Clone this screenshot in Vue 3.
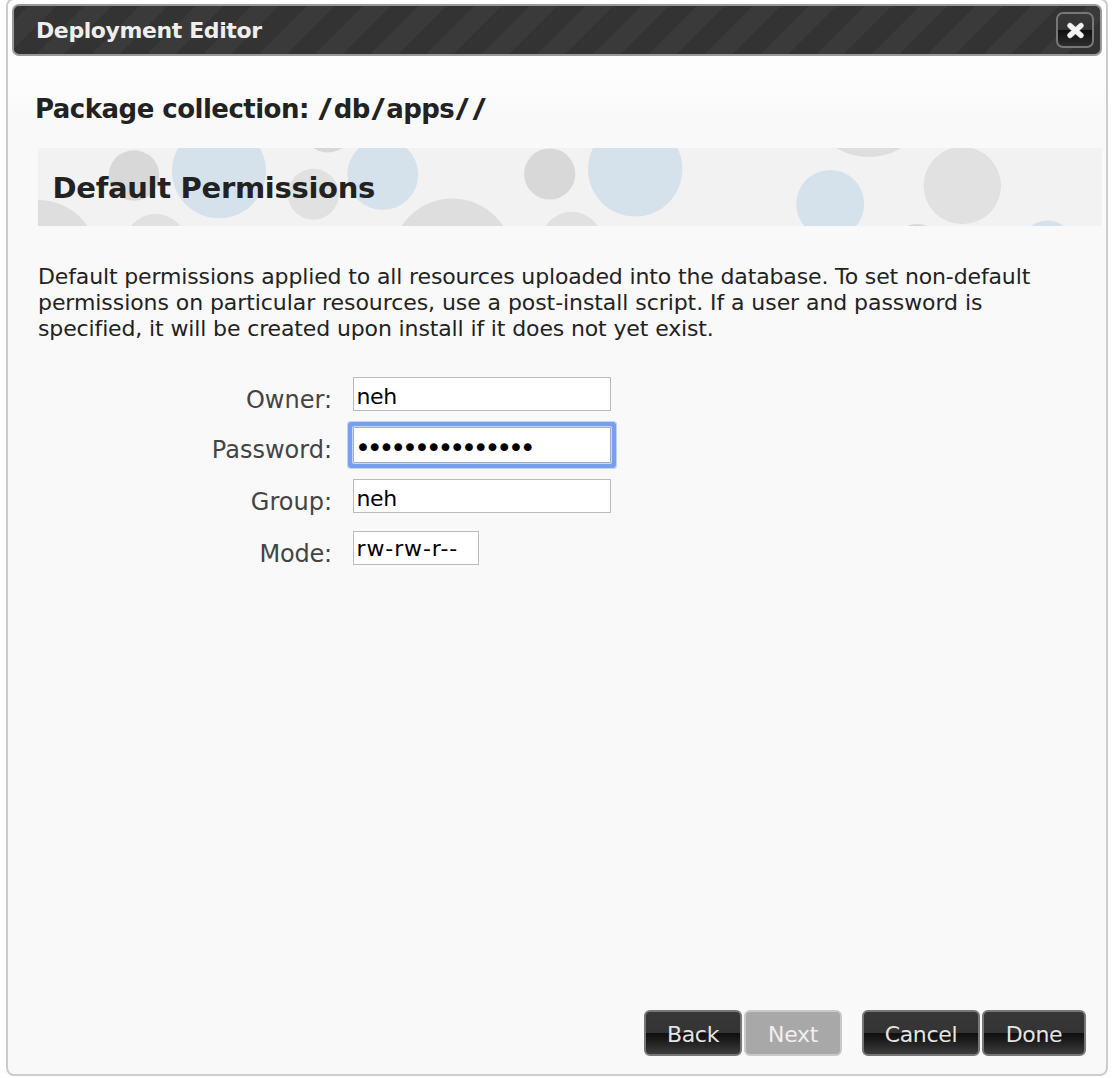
<script setup>
import { ref } from 'vue'

const fields = ref([
  { id: 'owner', label: 'Owner:', value: 'neh', type: 'text' },
  { id: 'password', label: 'Password:', value: 'secretpassword1', type: 'password' },
  { id: 'group', label: 'Group:', value: 'neh', type: 'text' },
  { id: 'mode', label: 'Mode:', value: 'rw-rw-r--', type: 'text' },
])

const circles = [
  [0, 112, 60, '#dedede'],
  [96, 27.5, 25.3, '#d8d8d8'],
  [117.7, 97, 31, '#e1e1e1'],
  [181, 23.3, 47, '#d5e2ec'],
  [289.7, -21.5, 26, '#d8d8d8'],
  [275.3, 46.3, 25.5, '#e1e1e1'],
  [344.8, 26.5, 35.5, '#d5e2ec'],
  [414.3, 111.6, 61, '#dedede'],
  [511.7, 26, 25.6, '#d8d8d8'],
  [533.7, 94.8, 31, '#e1e1e1'],
  [597.2, 21.3, 47.2, '#d5e2ec'],
  [830.7, -54, 63, '#dedede'],
  [792.2, 55.9, 34, '#d5e2ec'],
  [924.3, 37.6, 38.7, '#e1e1e1'],
  [879, 102, 26, '#d8d8d8'],
  [1009.5, 99.5, 27, '#d5e2ec'],
]
</script>

<template>
  <div class="page">
    <section class="dialog">
      <header class="titlebar">
        <span class="title">Deployment Editor</span>
        <button class="close" aria-label="Close">
          <svg width="22" height="20" viewBox="0 0 22 20">
            <path d="M6 5.6 L17 15.4 M17 5.6 L6 15.4" stroke="#999" stroke-width="5.8" stroke-linecap="round" />
            <path d="M6 5.6 L17 15.4 M17 5.6 L6 15.4" stroke="#f2f2f2" stroke-width="4.8" stroke-linecap="round" />
          </svg>
        </button>
      </header>
      <h1 class="package">Package collection: <span class="slash">/</span>db<span class="slash">/</span>apps<span class="slash">/</span><span class="slash">/</span></h1>
      <div class="banner">
        <svg class="bubbles" width="1064" height="78" viewBox="0 0 1064 78">
          <circle v-for="(c, i) in circles" :key="i" :cx="c[0]" :cy="c[1]" :r="c[2]" :fill="c[3]" />
        </svg>
        <h2>Default Permissions</h2>
      </div>
      <p class="intro">
        <span class="l1">Default permissions applied to all resources uploaded into the database. To set non-default</span><br />
        <span class="l2">permissions on particular resources, use a post-install script. If a user and password is</span><br />
        <span class="l3">specified, it will be created upon install if it does not yet exist.</span>
      </p>
      <form class="form">
        <div v-for="f in fields" :key="f.id" class="row" :class="f.id">
          <label :for="f.id">{{ f.label }}</label>
          <input :id="f.id" v-model="f.value" :type="f.type" />
        </div>
      </form>
      <footer class="actions">
        <button class="btn back">Back</button>
        <button class="btn next" disabled>Next</button>
        <button class="btn cancel">Cancel</button>
        <button class="btn done">Done</button>
      </footer>
    </section>
  </div>
</template>

<style>
body {
  margin: 0;
  background: #fff;
}
</style>

<style scoped>
.page {
  height: 1078px;
  overflow: hidden;
  display: flow-root;
  font-family: "DejaVu Sans", Verdana, sans-serif;
  font-size: 22px;
  color: #222;
}
.dialog {
  box-sizing: border-box;
  width: 1102px;
  height: 1078px;
  margin: -2px 0 0 6px;
  padding: 4px 4px 0;
  border: 2px solid #ccc;
  border-radius: 8px;
  background: linear-gradient(#fff 0, #fdfdfd 78px, #f9f9f9 115px, #f9f9f9 100%);
  display: flex;
  flex-direction: column;
}
.titlebar {
  box-sizing: border-box;
  height: 52px;
  flex: none;
  display: flex;
  align-items: center;
  justify-content: space-between;
  padding: 0 6px 0 22px;
  border: 2px solid #999;
  border-radius: 7px;
  background: repeating-linear-gradient(135deg, #333 0, #333 10px, #3a3a3a 10.5px, #3a3a3a 29.5px, #333 30px, #333 39.4px);
}
.title {
  font-weight: bold;
  letter-spacing: -0.4px;
  color: #eee;
  white-space: nowrap;
}
.close {
  box-sizing: border-box;
  width: 38px;
  height: 36px;
  padding: 0;
  display: flex;
  align-items: center;
  justify-content: center;
  border: 2px solid #777;
  border-radius: 7px;
  background: linear-gradient(#383838 0, #333 50%, #0f0f0f 51%, #2c2c2c 100%);
}
.package {
  margin: 37px 0 0 23px;
  font-size: 26px;
  line-height: 32px;
  letter-spacing: -0.52px;
  white-space: nowrap;
}
.slash {
  display: inline-block;
  width: 16.3px;
  letter-spacing: 0;
  text-align: center;
  transform: scaleX(1.4);
}
.banner {
  width: 1064px;
  height: 78px;
  margin: 23px 0 0 26px;
  background: #f2f2f2;
  position: relative;
  display: flex;
  align-items: center;
}
.bubbles {
  position: absolute;
  inset: 0;
}
.banner h2 {
  position: relative;
  margin: 1px 0 0 14.5px;
  font-size: 29px;
  line-height: 36px;
  letter-spacing: -0.3px;
  white-space: nowrap;
}
.intro {
  margin: 38px 0 0 26px;
  line-height: 26px;
  white-space: nowrap;
}
.l1 { letter-spacing: -0.137px; }
.l2 { letter-spacing: -0.07px; }
.l3 { letter-spacing: -0.13px; }
.form {
  margin: 35px 0 0;
  display: flex;
  flex-direction: column;
}
.row {
  display: flex;
  align-items: flex-start;
  height: 52px;
}
.row.owner { height: 50px; }
label {
  width: 320px;
  margin-right: 21px;
  padding-top: 7px;
  line-height: 32px;
  font-size: 24px;
  text-align: right;
  color: #444;
}
.mode label { letter-spacing: -0.2px; }
input {
  box-sizing: border-box;
  width: 258px;
  height: 34px;
  padding: 5px 3px 0 2.5px;
  border: 1px solid #bbb;
  outline: none;
  background: #fff;
  color: #000;
  font: 22px "DejaVu Sans", Verdana, sans-serif;
  letter-spacing: -0.4px;
}
#password {
  height: 36px;
  border-color: #9fabc8;
  padding: 4px 0 0 1px;
  font-size: 27px;
  letter-spacing: -4.15px;
  box-shadow: 0 0 0 1px #c8d7f5, 0 0 0 5px #769ff0, 0 0 0 6px #c3d4f7;
  border-radius: 1px;
}
#mode {
  width: 126px;
  padding-top: 0;
  letter-spacing: 0.9px;
}
.actions {
  margin: auto 16px 18px auto;
  display: flex;
  gap: 2px;
}
.btn {
  box-sizing: border-box;
  height: 46px;
  padding: 2px 0 0;
  border: 2px solid #777;
  border-radius: 6px;
  background: linear-gradient(#373737 0, #343434 49%, #0f0f0f 51%, #1a1a1a 65%, #3c3c3c 100%);
  color: #e4e4e4;
  font: 22px "DejaVu Sans", Verdana, sans-serif;
  letter-spacing: -0.3px;
}
.back, .next { width: 98px; }
.next {
  margin-right: 18px;
  background: #a8a8a8;
  border-color: #c9c9c9;
  color: #f0f0f0;
}
.cancel { width: 118px; }
.done { width: 104px; }
</style>
